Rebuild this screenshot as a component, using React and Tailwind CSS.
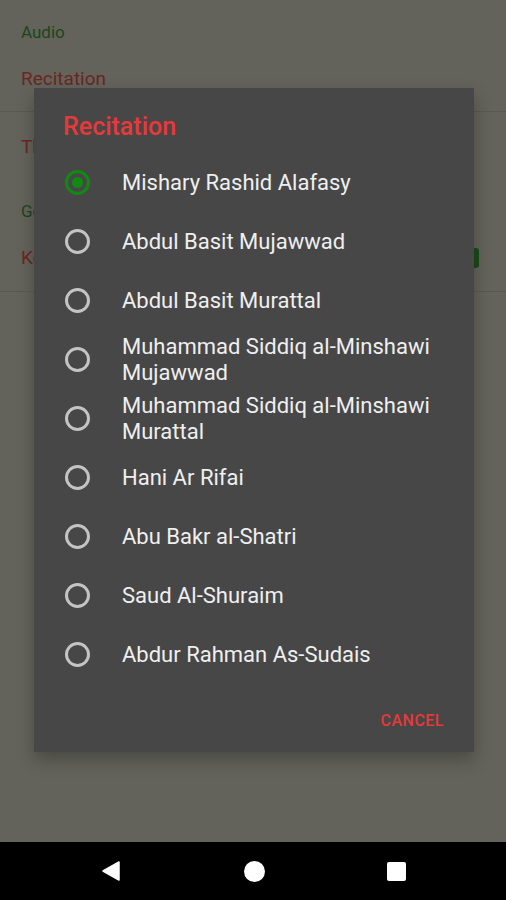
import { useState } from 'react';

const reciters = [
  'Mishary Rashid Alafasy',
  'Abdul Basit Mujawwad',
  'Abdul Basit Murattal',
  'Muhammad Siddiq al-Minshawi Mujawwad',
  'Muhammad Siddiq al-Minshawi Murattal',
  'Hani Ar Rifai',
  'Abu Bakr al-Shatri',
  'Saud Al-Shuraim',
  'Abdur Rahman As-Sudais',
];

function Radio({ checked }) {
  return (
    <span
      className={`w-[25px] h-[25px] rounded-full border-[3px] flex items-center justify-center shrink-0 ${
        checked ? 'border-[#118a11]' : 'border-[#c4c4c4]'
      }`}
    >
      {checked && <span className="w-[11px] h-[11px] rounded-full bg-[#118a11]" />}
    </span>
  );
}

export default function App() {
  const [selected, setSelected] = useState(0);

  return (
    <div className="relative w-[506px] h-[900px] bg-[#63635b] overflow-hidden font-['Roboto',sans-serif] flex flex-col">
      {/* dimmed settings screen */}
      <div className="flex-1">
        <div className="h-[112px] border-b border-[#595951] px-[21px] flex flex-col">
          <p className="text-[17px] text-[#1c461a] h-[66px] flex items-center">Audio</p>
          <p className="text-[19px] text-[#6a2622] h-[26px] flex items-center">Recitation</p>
        </div>
        <div className="h-[180px] border-b border-[#595951] px-[21px] flex flex-col">
          <p className="text-[19px] text-[#6a2622] h-[70px] flex items-center">Theme</p>
          <p className="text-[17px] text-[#1c461a] h-[60px] flex items-center">General</p>
          <div className="h-[50px] pb-[16px] flex items-center justify-between">
            <p className="text-[19px] text-[#6a2622]">Keep screen on</p>
            <span className="w-[20px] h-[20px] rounded-[3px] bg-[#1a4a1a] mr-[6px]" />
          </div>
        </div>
      </div>

      {/* nav bar */}
      <div className="h-[58px] bg-black flex items-center justify-between pl-[101px] pr-[100px]">
        <svg width="20" height="20" viewBox="0 0 20 20">
          <path d="M18 1 L18 19 L2 10 Z" fill="#fff" strokeLinejoin="round" stroke="#fff" strokeWidth="1.5" />
        </svg>
        <span className="w-[21px] h-[21px] rounded-full bg-white" />
        <span className="w-[19px] h-[19px] rounded-[2px] bg-white" />
      </div>

      {/* dialog */}
      <div className="absolute left-[34px] top-[88px] w-[440px] h-[664px] bg-[#474747] shadow-[0_8px_16px_rgba(0,0,0,0.25)] flex flex-col">
        <h2 className="pl-[29px] pt-[24px] h-[54px] text-[25px] leading-[30px] font-medium text-[#e5393b]">Recitation</h2>
        <ul className="mt-[11px] flex flex-col">
          {reciters.map((name, i) => (
            <li
              key={name}
              onClick={() => setSelected(i)}
              className="h-[59px] flex items-center pl-[31px] pr-[24px] gap-[32px] cursor-pointer"
            >
              <Radio checked={selected === i} />
              <span className="text-[22px] leading-[26px] text-[#efefef]">{name}</span>
            </li>
          ))}
        </ul>
        <div className="flex-1 flex items-center justify-end pr-[30px] pt-[6px]">
          <button className="text-[16px] font-medium tracking-[0.03em] text-[#e5393b] uppercase">Cancel</button>
        </div>
      </div>
    </div>
  );
}
